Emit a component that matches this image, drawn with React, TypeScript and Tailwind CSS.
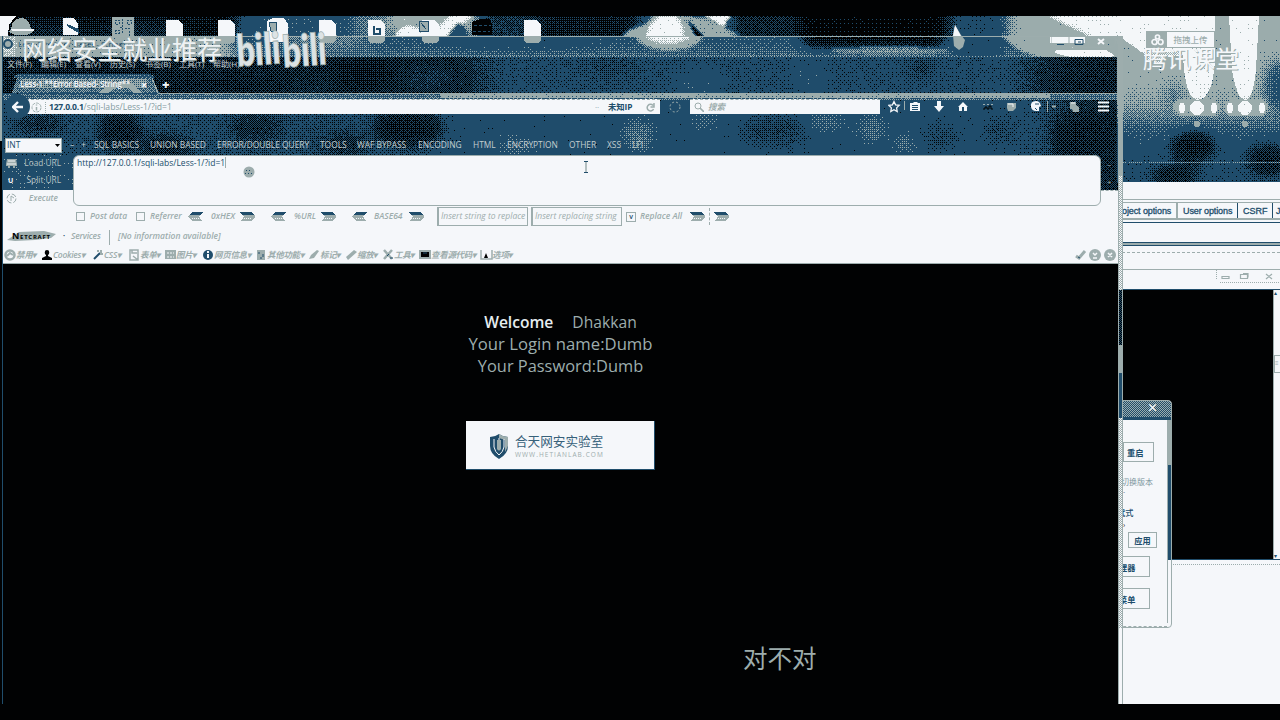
import React from 'react';

const bayer = [0, 8, 2, 10, 12, 4, 14, 6, 3, 11, 1, 9, 15, 7, 13, 5];

function Blob({ x, y, rx, ry, l }: { x: number; y: number; rx: number; ry: number; l: string }) {
  return <ellipse cx={x} cy={y} rx={rx} ry={ry} fill={l} />;
}

function Wallpaper() {
  return (
    <svg className="absolute left-0 top-4" width="1280" height="190" viewBox="0 16 1280 190" shapeRendering="crispEdges">
      <defs>
        <filter id="soft" x="-20%" y="-20%" width="140%" height="140%" colorInterpolationFilters="sRGB">
          <feGaussianBlur stdDeviation="7" />
        </filter>
        <filter id="soft2" x="-20%" y="-20%" width="140%" height="140%" colorInterpolationFilters="sRGB">
          <feGaussianBlur stdDeviation="1.5" />
        </filter>
        <filter id="grain" filterUnits="userSpaceOnUse" x="0" y="16" width="1280" height="190" colorInterpolationFilters="sRGB">
          <feTurbulence type="fractalNoise" baseFrequency="0.7" numOctaves="2" seed="4" />
          <feColorMatrix values="1 0 0 0 0.2  1 0 0 0 0.2  1 0 0 0 0.2  0 0 0 0 0.1" />
        </filter>
        <filter id="palette" filterUnits="userSpaceOnUse" x="0" y="16" width="1280" height="190" colorInterpolationFilters="sRGB">
          <feComponentTransfer>
            <feFuncR type="discrete" tableValues="0.004 0.125 0.61 0.96" />
            <feFuncG type="discrete" tableValues="0.008 0.30 0.675 0.97" />
            <feFuncB type="discrete" tableValues="0.012 0.42 0.675 0.98" />
          </feComponentTransfer>
        </filter>
        <pattern id="bayer" width="4" height="4" patternUnits="userSpaceOnUse">
          {bayer.map((v, i) => {
            const a = (v - 7.5) / 7.5;
            return <rect key={i} x={i % 4} y={Math.floor(i / 4)} width="1" height="1" fill={a > 0 ? '#fff' : '#000'} fillOpacity={Math.abs(a) * (a > 0 ? 0.2 : 0.22)} />;
          })}
        </pattern>
        <linearGradient id="glassTone" x1="0" x2="1">
          <stop offset="0" stopColor="#202020" />
          <stop offset="0.3" stopColor="#262626" />
          <stop offset="0.4" stopColor="#2b2b2b" />
          <stop offset="0.45" stopColor="#434343" />
          <stop offset="0.9" stopColor="#454545" />
          <stop offset="0.95" stopColor="#2a2a2a" />
          <stop offset="1" stopColor="#242424" />
        </linearGradient>
        <linearGradient id="lowTone" x1="0" x2="1">
          <stop offset="0" stopColor="#444" />
          <stop offset="0.3" stopColor="#404040" />
          <stop offset="0.42" stopColor="#4c4c4c" />
          <stop offset="0.9" stopColor="#4c4c4c" />
          <stop offset="1" stopColor="#2a2a2a" />
        </linearGradient>
        <linearGradient id="titleTone" x1="0" x2="0" y1="0" y2="1">
          <stop offset="0" stopColor="#555" />
          <stop offset="0.4" stopColor="#5c5c5c" />
          <stop offset="1" stopColor="#6c6c6c" />
        </linearGradient>
        <linearGradient id="skyTone" x1="0" x2="0" y1="0" y2="1">
          <stop offset="0" stopColor="#a8a8a8" />
          <stop offset="0.42" stopColor="#a4a4a4" />
          <stop offset="0.55" stopColor="#8a8a8a" />
          <stop offset="0.68" stopColor="#606060" />
          <stop offset="0.78" stopColor="#4e4e4e" />
          <stop offset="1" stopColor="#464646" />
        </linearGradient>
        <clipPath id="deskTop"><rect x="0" y="16" width="1280" height="20" /></clipPath>
        <clipPath id="glassTop"><rect x="3" y="36" width="1115" height="21" /></clipPath>
        <clipPath id="glass"><rect x="3" y="57" width="1115" height="36" /></clipPath>
        <clipPath id="glassLow"><rect x="3" y="93" width="1115" height="98" /></clipPath>
        <clipPath id="deskRight"><rect x="1117" y="16" width="163" height="166" /></clipPath>
      </defs>
      <g filter="url(#palette)">
        <rect x="0" y="16" width="1280" height="175" fill="#484848" />
        <g clipPath="url(#deskTop)">
          <g filter="url(#soft)">
            <rect x="-20" y="0" width="255" height="60" fill="#101010" />
            <Blob x={55} y={34} rx={40} ry={9} l="#303030" />
            <Blob x={142} y={34} rx={45} ry={12} l="#303030" />
            <rect x="242" y="0" width="110" height="60" fill="#555" />
            <rect x="352" y="0" width="36" height="60" fill="#747474" />
            <rect x="388" y="-10" width="90" height="45" fill="#aaa" />
            <rect x="480" y="0" width="110" height="60" fill="#363636" />
            <rect x="540" y="-10" width="95" height="60" fill="#1c1c1c" />
            <rect x="800" y="-10" width="146" height="70" fill="#020202" />
            <rect x="735" y="-10" width="65" height="70" fill="#2a2a2a" />
            <rect x="1008" y="-10" width="272" height="70" fill="#a8a8a8" />
          </g>
          <g filter="url(#soft2)">
            <path d="M394 37q10-16 21-9l22 2 15-16h22l-14 12-4 12z" fill="#fff" />
            <path d="M446 38l10-14q7-5 13 14z" fill="#4d4d4d" />
            <path d="M622 37q6-9 23-12l10-12h30l18 25z" fill="#a8a8a8" />
            <path d="M647 38q0-14 14-22h14q10 10 8 22z" fill="#fff" />
            <path d="M702 14h29l-7 13z" fill="#fff" />
            <path d="M683 15l24 4 16 8 18 9-40 2z" fill="#a2a2a2" />
            <path d="M687 20l18 18h-8z" fill="#000" />
            <path d="M1048 15l45 22H1280V14z" fill="#fff" />
          </g>
        </g>
        <g clipPath="url(#glassTop)">
          <rect x="3" y="36" width="1115" height="21" fill="url(#titleTone)" />
          <g filter="url(#soft)">
            <rect x="-10" y="20" width="242" height="50" fill="#a0a0a0" />
            <Blob x={325} y={40} rx={50} ry={9} l="#808080" />
            <Blob x={520} y={40} rx={90} ry={5} l="#404040" />
            <rect x="804" y="24" width="139" height="22" fill="#020202" />
            <rect x="955" y="20" width="46" height="50" fill="#4c4c4c" />
          </g>
          <g filter="url(#soft2)">
            <Blob x={669} y={36} rx={33} ry={14} l="#a8a8a8" />
            <Blob x={668} y={34} rx={22} ry={9} l="#e4e4e4" />
            <rect x="0" y="36" width="17" height="21" fill="#bbb" />
            <Blob x={890} y={51} rx={60} ry={4} l="#828282" />
            <path d="M1002 33h130v26h-80q-33-3-50-24z" fill="#a8a8a8" />
          </g>
          <path d="M1056 50h50l8 5-3 4h-34l-22-6z" fill="#fff" />
          <rect x="1050" y="37" width="35" height="6" fill="#fff" />
        </g>
        <g clipPath="url(#glass)">
          <rect x="3" y="57" width="1115" height="36" fill="url(#glassTone)" />
          <g filter="url(#soft)">
            <Blob x={365} y={72} rx={30} ry={12} l="#1a1a1a" />
            <Blob x={430} y={78} rx={30} ry={13} l="#363636" />
            <Blob x={310} y={86} rx={30} ry={8} l="#343434" />
            <Blob x={610} y={65} rx={30} ry={14} l="#3c3c3c" />
            <Blob x={700} y={84} rx={25} ry={12} l="#585858" />
            <Blob x={810} y={76} rx={15} ry={14} l="#585858" />
            <Blob x={922} y={68} rx={12} ry={12} l="#363636" />
          </g>
          <path d="M12 93l5-15q1-3 5-3h125q5 0 7 6l5 12z" fill="#727272" />
          <path d="M22 79h125v9H18z" fill="#8a8a8a" />
          <path d="M98 93l12-9 10-2 12 2 11 9h-9l-7-6h-10l-9 6z" fill="#a8a8a8" />
          <path d="M14 76q2-2 6-2h128q4 0 6 3v1H14z" fill="#606060" />
        </g>
        <g clipPath="url(#glassLow)">
          <rect x="3" y="93" width="1115" height="98" fill="url(#lowTone)" />
          <g filter="url(#soft)">
            <Blob x={408} y={128} rx={34} ry={18} l="#202020" />
            <Blob x={345} y={145} rx={25} ry={12} l="#303030" />
            <Blob x={255} y={128} rx={25} ry={16} l="#303030" />
            <Blob x={120} y={132} rx={20} ry={20} l="#262626" />
            <Blob x={165} y={148} rx={25} ry={12} l="#282828" />
            <Blob x={40} y={124} rx={28} ry={8} l="#2e2e2e" />
            <Blob x={515} y={148} rx={18} ry={10} l="#686868" />
            <Blob x={775} y={131} rx={36} ry={16} l="#3a3a3a" />
            <Blob x={638} y={135} rx={16} ry={16} l="#727272" />
            <Blob x={705} y={120} rx={14} ry={8} l="#6c6c6c" />
            <Blob x={825} y={122} rx={20} ry={8} l="#707070" />
            <Blob x={872} y={128} rx={14} ry={14} l="#6e6e6e" />
            <Blob x={905} y={143} rx={12} ry={9} l="#727272" />
            <Blob x={940} y={137} rx={18} ry={12} l="#3c3c3c" />
            <Blob x={1000} y={130} rx={17} ry={14} l="#3c3c3c" />
            <Blob x={1080} y={137} rx={28} ry={25} l="#232323" />
          </g>
          <rect x="3" y="94" width="1115" height="6" fill="#6e6e6e" />
          <rect x="440" y="94" width="610" height="4" fill="#a0a0a0" />
          <rect x="3" y="155" width="70" height="36" fill="#555" />
        </g>
        <g clipPath="url(#deskRight)">
          <rect x="1117" y="16" width="163" height="166" fill="url(#skyTone)" />
          <g filter="url(#soft)">
            <Blob x={1193} y={146} rx={22} ry={15} l="#1c1c1c" />
            <Blob x={1175} y={175} rx={24} ry={10} l="#242424" />
            <Blob x={1268} y={160} rx={22} ry={16} l="#262626" />
            <Blob x={1278} y={86} rx={14} ry={26} l="#555" />
            <Blob x={1174} y={96} rx={8} ry={12} l="#686868" />
          </g>
          <path d="M1117 16h98v44q-2 39-18 40-12-2-14-45l-37 0-29-20z" fill="#fff" />
          <path d="M1229 16h30l-3 54q-3 30-11 30t-13-30z" fill="#fff" />
          <path d="M1140 50l8 10 12 4 6-8h16v-4h-42z" fill="#c4c4c4" />
          <g filter="url(#soft2)">
            <rect x="1174" y="99" width="46" height="17" rx="8" fill="#a8a8a8" />
            <rect x="1224" y="99" width="44" height="17" rx="8" fill="#a8a8a8" />
          </g>
          {[1182, 1214, 1230, 1262].map((x) => <ellipse key={x} cx={x} cy="108" rx="3" ry="5.5" fill="#fff" />)}
          <circle cx="1197" cy="108" r="7" fill="#fff" />
          <circle cx="1245" cy="108" r="7" fill="#fff" />
          <circle cx="1197" cy="124" r="3" fill="#a8a8a8" />
          <circle cx="1245" cy="124" r="3" fill="#a8a8a8" />
          <path d="M1123 162.5h157" stroke="#777" />
        </g>
        <rect x="0" y="16" width="1280" height="175" filter="url(#grain)" />
        <rect x="0" y="16" width="1280" height="175" fill="url(#bayer)" />
      </g>
      <path d="M3 36.500H1109q8 0 9 7M158 93.500H1118M158 93l-6-15" stroke="#9dadad" fill="none" />
      <path d="M3 56.500H1105" stroke="#9dadad" strokeDasharray="1 2" />
    </svg>
  );
}

function DesktopIcons() {
  return (
    <svg className="absolute left-0 top-4" width="600" height="28" viewBox="0 16 600 28" shapeRendering="crispEdges">
      <path d="M0 16h16l-7 9-1 11H0z" fill="#f5f7fa" />
      <path d="M11 29q1-11 11-11 8 1 9 11l2 3-6 3H15l-6-3z" fill="#9dadad" />
      <path d="M10 29h24v2H13z" fill="#f5f7fa" />
      <path d="M63 18h11l4 6v11H63z" fill="#f5f7fa" />
      <path d="M67 24l12 5v4l-11-6z" fill="#204d6b" />
      <rect x="112" y="17" width="22" height="19" fill="#9dadad" />
      <path d="M115 20h4v4h-4zM127 20h4v4h-4zM115 30h4v3h-4zM122 19v14M125 28h6M120 27h3M129 31v5" stroke="#204d6b" strokeWidth="1" strokeDasharray="2 1" fill="none" />
      {[166, 218, 319, 368, 422, 524].map((x) => (
        <g key={x}>
          <path d={`M${x} 20h12l5 5v11H${x}z`} fill="#f5f7fa" />
          <path d={`M${x} 37h17v4l-3 2h-11l-3-2z`} fill="#9dadad" />
        </g>
      ))}
      <path d="M267 21l6-3h11l4 6v18h-21z" fill="#f5f7fa" />
      <path d="M269 22h8l-1 9h-5z" fill="#9dadad" stroke="#204d6b" />
      <path d="M374 26v8h6v-5h-4" stroke="#204d6b" strokeWidth="2" fill="none" />
      <path d="M419 21h9v10h-9zM421 23l5 6" stroke="#204d6b" fill="#9dadad" />
      <path d="M472 22l8-3h10l2 6v10h-20z" fill="#010203" />
      <path d="M474 25h17M473 31h17" stroke="#204d6b" strokeDasharray="3 2" />
    </svg>
  );
}

function Arrow({ left = false }: { left?: boolean }) {
  return (
    <svg width="15" height="9" viewBox="0 0 15 9" className={left ? 'shrink-0 -scale-x-100' : 'shrink-0'} shapeRendering="crispEdges">
      <path d="M0 0h11l4 4v1l-4 4H1l3-4.500z" fill="#9dadad" />
      <path d="M0 0h11l3 3H2z" fill="#204d6b" />
      <path d="M4 6.500h8" stroke="#f5f7fa" strokeDasharray="1 1" />
    </svg>
  );
}

const menus = [['文件(F)', 'w-[34px]'], ['编辑(E)', 'w-[34px]'], ['查看(V)', 'w-[35px]'], ['历史(S)', 'w-[35px]'], ['书签(B)', 'w-[34px]'], ['工具(T)', 'w-[34px]'], ['帮助(H)', 'w-[34px]']];
const hack = [
  ['SQL BASICS', 'w-[56px]'], ['UNION BASED', 'w-[67px]'], ['ERROR/DOUBLE QUERY', 'w-[103px]'], ['TOOLS', 'w-[37px]'], ['WAF BYPASS', 'w-[61px]'],
  ['ENCODING', 'w-[55px]'], ['HTML', 'w-[34px]'], ['ENCRYPTION', 'w-[62px]'], ['OTHER', 'w-[38px]'], ['XSS', 'w-[25px]'], ['LFI', 'w-[20px]'],
];

function NavBar() {
  return (
    <div className="flex h-[28px] items-center pb-px pl-[2px]">
      <div className="z-10 flex size-[25px] shrink-0 items-center justify-center rounded-full bg-[#204d6b]">
        <svg width="12" height="12" viewBox="0 0 12 12"><path d="M6 1L1 6l5 5M1 6h10" stroke="#f5f7fa" strokeWidth="2.400" fill="none" /></svg>
      </div>
      <div className="-ml-[4px] flex h-[15px] w-[634px] shrink-0 items-center border-t border-dashed border-[#9dadad] bg-[#f5f7fa] pl-[5px] leading-none text-[#829a9f]">
        <svg className="shrink-0" width="11" height="11" viewBox="0 0 11 11" fill="none" stroke="#9dadad"><circle cx="5.500" cy="5.500" r="4.500" strokeDasharray="3 1" /><path d="M5.500 2.500v1M5.500 5v3.500" strokeWidth="1.500" /></svg>
        <span className="ml-[3px] h-[11px] border-l border-dotted border-[#9dadad]" />
        <span className="ml-[3px] w-[124px] shrink-0 whitespace-nowrap text-[8.6px]"><b className="font-bold tracking-[-0.25px] text-[#204d6b]">127.0.0.1</b>/sqli-labs/Less-1/?id=1</span>
        <span className="ml-[422px] w-[13px] shrink-0 text-[8px]">··</span>
        <b className="w-[26px] shrink-0 whitespace-nowrap text-[8.3px] text-[#204d6b]">未知IP</b>
        <svg className="ml-[12px] shrink-0" width="9" height="9" viewBox="0 0 9 9" fill="none" stroke="#9dadad" strokeWidth="1.500"><path d="M7 2.500A3.300 3.300 0 1 0 7.500 6M8 0v4H4.500" /></svg>
      </div>
      <svg className="ml-2 shrink-0" width="14" height="14" viewBox="0 0 14 14" fill="none" stroke="#9dadad"><circle cx="7" cy="7" r="5" strokeDasharray="2 2" /></svg>
      <div className="ml-[8px] flex h-[15px] w-[190px] shrink-0 items-center border-t border-dashed border-[#9dadad] bg-[#f5f7fa] pl-1 text-[9px] leading-none text-[#9dadad]">
        <svg className="mr-1" width="10" height="10" viewBox="0 0 10 10" fill="none" stroke="#9dadad"><circle cx="4" cy="4" r="3" /><path d="M6 6l4 4" strokeWidth="1.600" /></svg>
        <b className="text-[8.5px] italic">搜索</b>
      </div>
      <svg className="ml-[8px] shrink-0" width="224" height="14" viewBox="888 100 224 14">
        <path d="M894 101.500l1.600 3.300 3.600.5-2.600 2.600.6 3.600-3.200-1.700-3.200 1.700.6-3.600-2.600-2.600 3.600-.5z" stroke="#f5f7fa" strokeWidth="1.300" fill="#204d6b" />
        <path d="M904.500 101v9M1047.500 101v11" stroke="#9dadad" />
        <path d="M910 103h3l1-1h3l1 1h2v8h-10z" fill="#f5f7fa" /><path d="M912 105.500h6M912 107.500h6M912 109.500h6" stroke="#204d6b" />
        <path d="M937 101h4v5h3l-5 6-5-6h3z" fill="#f5f7fa" />
        <path d="M958 107l5-5 5 5h-1v4h-3v-4h-2v4h-3v-4z" fill="#f5f7fa" />
        <path d="M983 109h2v-2h2v2h2v-3h2v3h2" stroke="#010203" fill="none" /><path d="M983 104.500h10" stroke="#9dadad" strokeDasharray="2 2" />
        <path d="M1007 103h9v5l-3 3h-5l-1-3z" fill="#9dadad" /><path d="M1008 104h5v3" stroke="#f5f7fa" fill="none" />
        <path d="M1031 107q-1-6 5-6 4 0 5 5l-2 1v4h-3q-4 0-5-4z" fill="#f5f7fa" /><path d="M1035 104h4M1035 108l2 2" stroke="#204d6b" />
        <path d="M1052 106.500h4" stroke="#9dadad" strokeWidth="2" />
        <path d="M1070 102h6v3l3 2v5h-6l-1-3h-2z" fill="#9dadad" /><path d="M1071 103h4" stroke="#f5f7fa" />
        <path d="M1098 102.500h11M1098 106.500h11M1098 110.500h11" stroke="#f5f7fa" strokeWidth="2" />
      </svg>
    </div>
  );
}

const devIcons = [
  <g key="0"><circle cx="6" cy="6" r="4.500" stroke="#9dadad" strokeWidth="2.500" fill="#f5f7fa" /><path d="M3 7l3-3 3 2" stroke="#9dadad" fill="none" strokeWidth="2" /></g>,
  <path key="1" d="M6 1q3 0 2 4l-1 1v1l4 2v2H1V9l4-2V6L4 5Q3 1 6 1z" fill="#010203" />,
  <g key="2"><path d="M2 10l6-6" stroke="#204d6b" strokeWidth="2" /><path d="M5 2h2M8 5h3M9 1v3" stroke="#9dadad" strokeWidth="2" /></g>,
  <path key="3" d="M2 1h8v10H2zM4 1v3h5M5 7l5 4" stroke="#9dadad" strokeWidth="1.500" fill="none" />,
  <g key="4"><path d="M1 1h11v9H1z" fill="#9dadad" /><path d="M3 4h7M3 8h7" stroke="#f5f7fa" strokeDasharray="2 1" /></g>,
  <g key="5"><circle cx="6" cy="6" r="5" fill="#204d6b" /><path d="M6 2v2M6 5v4" stroke="#f5f7fa" strokeWidth="2" /></g>,
  <g key="6"><path d="M2 1h8v10H2z" fill="#9dadad" /><path d="M4 3v2M8 5v3M5 9h2" stroke="#204d6b" /></g>,
  <path key="7" d="M1 10l2-4 6-5 2 1-5 7z" fill="#9dadad" />,
  <path key="8" d="M1 8l8-7 3 2-9 8z" fill="#9dadad" />,
  <g key="9"><path d="M2 1l8 9M10 1L2 10" stroke="#9dadad" strokeWidth="2.500" /><path d="M5 7l2-2M8 9h3" stroke="#204d6b" /></g>,
  <g key="10"><path d="M0 1h12v9H0z" fill="#9dadad" /><path d="M2 3h8v5H2z" fill="#010203" /><path d="M4 4h4" stroke="#204d6b" /></g>,
  <g key="11"><path d="M1 1v9h11V1" stroke="#9dadad" strokeWidth="1.500" fill="none" /><path d="M4 9l2-5 2 5z" fill="#010203" /></g>,
];
const devLabels = [
  ['禁用▾', 'w-[37px]'], ['Cookies▾', 'w-[51px]'], ['CSS▾', 'w-[36px]'], ['表单▾', 'w-[36px]'], ['图片▾', 'w-[38px]'], ['网页信息▾', 'w-[53px]'], ['其他功能▾', 'w-[53px]'], ['标记▾', 'w-[37px]'], ['缩放▾', 'w-[37px]'], ['工具▾', 'w-[37px]'], ['查看源代码▾', 'w-[61px]'], ['选项▾', 'w-[37px]'],
];

function Hackbar() {
  return (
    <>
      <div className="flex h-4 items-center pl-0.5">
        <div className="flex h-[15px] w-[57px] shrink-0 items-center justify-between border border-[#9dadad] bg-[#f5f7fa] px-px text-[8.5px] text-[#204d6b]">
          INT<svg width="5" height="3" viewBox="0 0 5 3"><path d="M0 0h5L2.500 3z" fill="#010203" /></svg>
        </div>
        <div className="flex pl-[8px] pt-px text-[8.4px] font-medium leading-none text-[#c3cecf]">
          <span className="w-[11px]">–</span><span className="w-[13px]">+</span>
          {hack.map(([t, w]) => <span key={t} className={`${w} whitespace-nowrap`}>{t}</span>)}
        </div>
      </div>
      <div className="mt-[2px] flex h-[52px]">
        <div className="flex w-[70px] shrink-0 flex-col text-[8.3px] leading-none text-[#b7c4c5]">
          <div className="flex h-[16px] items-center justify-between pl-[3px] pr-[12px]">
            <svg width="11" height="9" viewBox="0 0 11 9"><path d="M1 0h9l1 5v2h-2v2H7V7H4v2H2V7H0V5z" fill="#9dadad" /><path d="M2 2h7M1 5h9" stroke="#f5f7fa" /></svg>Load URL
          </div>
          <div className="flex h-[19px] items-center justify-between pl-[5px] pr-[12px]"><b className="text-[7px] text-[#f5f7fa]">U</b>Split URL</div>
          <div className="flex h-[17px] items-center justify-between bg-[#f5f7fa] pl-[3px] pr-[15px] text-[#9dadad]">
            <svg width="11" height="11" viewBox="0 0 11 11" fill="none" stroke="#9dadad"><circle cx="5.500" cy="5.500" r="4.500" strokeDasharray="5 2" /><path d="M5 3v5M5 3l3 2" /></svg><b className="font-semibold italic">Execute</b>
          </div>
        </div>
        <div className="w-[1028px] shrink-0 bg-[linear-gradient(to_bottom,transparent_35px,#f5f7fa_35px)]">
          <div className="h-[51px] rounded-[6px] border border-[#9dadad] bg-[#f5f7fa] px-[3px] pt-[3px] text-[8.5px] leading-[8px] text-[#204d6b]"><span className="border-r border-[#9dadad]">http://127.0.0.1/sqli-labs/Less-1/?id=1</span></div>
        </div>
        <div className="flex flex-1 flex-col text-[8px] leading-none text-[#9dadad]">
          <div className="h-[35px] pl-[6px] pt-[5px]">–<br /><span className="mt-2.5 block">+</span></div>
          <div className="flex-1 border-t border-dashed border-[#9dadad] bg-[#f5f7fa]" />
        </div>
      </div>
    </>
  );
}

function Options() {
  const box = 'size-[9px] shrink-0 border border-[#9dadad]';
  return (
    <div className="flex h-[19px] items-center whitespace-nowrap bg-[#f5f7fa] pl-[73px] text-[8.5px] font-semibold italic leading-none text-[#9dadad]">
      <span className={box} /><span className="w-[51px] pl-[5px]">Post data</span>
      <span className={box} /><span className="w-[43px] pl-[5px]">Referrer</span>
      <Arrow left /><span className="w-[37px] pl-[8px]">0xHEX</span><Arrow />
      <span className="w-[16px] shrink-0" /><Arrow left /><span className="w-[35px] pl-[8px]">%URL</span><Arrow />
      <span className="w-[16px] shrink-0" /><Arrow left /><span className="w-[42px] pl-[7px]">BASE64</span><Arrow />
      <span className="ml-[13px] flex h-[19px] w-[91px] shrink-0 items-center overflow-hidden border border-l-2 border-[#9dadad] pl-[2px] font-medium">Insert string to replace</span>
      <span className="ml-[3px] flex h-[19px] w-[91px] shrink-0 items-center overflow-hidden border border-l-2 border-[#9dadad] pl-[2px] font-medium">Insert replacing string</span>
      <span className="ml-[4px] flex size-[10px] items-center justify-center border border-[#9dadad] text-[7px] not-italic text-[#204d6b]">v</span>
      <span className="w-[54px] pl-[4px]">Replace All</span><Arrow />
      <span className="mx-[4px] h-[17px] border-l border-dashed border-[#9dadad]" /><Arrow />
    </div>
  );
}

function Browser() {
  return (
    <div className="absolute left-0 top-9 flex h-[668px] w-[1123px] font-['Open_Sans','Noto_Sans_CJK_SC',sans-serif]">
      <div className="w-[3px] shrink-0 border-r border-[#204d6b] bg-[#010203]"><div className="h-[105px] bg-[#9dadad]" /></div>
      <div className="flex w-[1115px] shrink-0 flex-col">
        <div className="flex h-[20px] items-start justify-between pl-0">
          <div className="flex items-center gap-[5px] pt-[3px] text-[8px] leading-[10px] text-[#204d6b]">
            <span className="size-[10px] rounded-full border-2 border-[#204d6b] bg-[#9dadad]" />Less-1 **Error Based- String**
          </div>
          <svg width="65" height="12" viewBox="0 0 65 12" className="mr-[2px]"><path d="M0 0v8q0 3 4 3h56q4 0 4-3V0M18 0v11M37 0v11" stroke="#9dadad" fill="none" /><path d="M6 8.500h7M24 3.500h8v5h-8zM27 6h3" stroke="#204d6b" fill="none" /><path d="M47 3l6 5M53 3l-6 5" stroke="#f5f7fa" fill="none" strokeWidth="2" /></svg>
        </div>
        <div className="flex h-[15px] items-center whitespace-nowrap pl-[4px] text-[8px] leading-none text-[#c3cecf]">
          {menus.map(([t, w]) => <span key={t} className={w}>{t}</span>)}
        </div>
        <div className="flex h-[22px] items-center pl-[17px] pt-[4px] text-[8px] font-semibold leading-none text-[#f5f7fa]">
          <span className="w-[121px] whitespace-nowrap tracking-[-0.2px]">Less-1 **Error Based- String**</span>
          <b className="w-[21px] text-[11px]">×</b><b className="text-[13px]">+</b>
        </div>
        <NavBar />
        <div className="h-[16px]" />
        <Hackbar />
        <Options />
        <div className="flex h-[20px] items-center bg-[#f5f7fa] pl-1 text-[8.5px] font-semibold italic leading-none text-[#9dadad]">
          <svg width="50" height="13" viewBox="0 0 50 13"><path d="M0 10l12-8 25-1 12 3-5 4-16 2-20 1z" fill="#9dadad" /><text x="5" y="9" fontSize="9" fontWeight="700" fontFamily="Open Sans" fontStyle="normal" fill="#010203" textLength="38" style={{ fontVariantCaps: 'small-caps' }}>Netcraft</text></svg>
          <span className="w-[14px] text-center text-[#204d6b]">·</span><span className="w-[38px] tracking-[-0.2px]">Services</span>
          <span className="mt-0.5 h-[15px] w-[9px] border-l border-[#9dadad]" /><span>[No information available]</span>
        </div>
        <div className="flex h-[18px] items-center whitespace-nowrap border-b border-[#9dadad] bg-[#f5f7fa] pl-[1px] text-[8.5px] font-semibold italic leading-none text-[#9dadad]">
          {devLabels.map(([t, w], i) => (
            <span key={t} className={`flex shrink-0 items-center ${w}`}><svg className="shrink-0" width="13" height="12" viewBox="0 0 13 12">{devIcons[i]}</svg><span className="-ml-px pt-px tracking-[-0.3px]">{t}</span></span>
          ))}
          <svg className="ml-auto mr-[1px]" width="42" height="12" viewBox="0 0 42 12"><path d="M1 7l3 2 6-7" stroke="#9dadad" strokeWidth="3" fill="none" /><path d="M3 8l2 1" stroke="#204d6b" /><circle cx="20" cy="6" r="6" fill="#9dadad" /><circle cx="35" cy="6" r="6" fill="#9dadad" /><path d="M18 4l2 2 2-2M18 9h4M33 4l4 4M37 4l-4 4" stroke="#f5f7fa" strokeWidth="1.500" fill="none" /></svg>
        </div>
        <main className="flex flex-1 flex-col items-center bg-[#010203] pt-[47px] text-[16.7px] leading-[22px] text-[#9dadad]">
          <div className="text-[15.6px]"><span className="font-semibold text-[#e6edf0]">Welcome</span><span className="ml-[19px] tracking-[.05px]">Dhakkan</span></div>
          <div>Your Login name:Dumb</div>
          <div className="text-[16.4px]">Your Password:Dumb</div>
          <div className="mt-[44px] flex h-[49px] w-[189px] items-center border-b border-r border-[#204d6b] bg-[#f5f7fa] pl-[23px] pt-[2px]">
            <svg width="20" height="25" viewBox="0 0 20 25"><path d="M1 3q5 0 9-3 4 3 9 3v9q0 8-9 13-9-5-9-13z" fill="#204d6b" /><path d="M10 0q4 3 9 3v9l-3 6V6l-6-2z" fill="#9dadad" /><path d="M5 5v8q1 5 5 8 4-3 5-8V5M10 4v12" stroke="#f5f7fa" fill="none" /><path d="M8 6h4v9q-2 3-4 0z" fill="#9dadad" /></svg>
            <div className="ml-[6px] flex flex-col"><span className="text-[12.600px] leading-[14px] text-[#37617a] font-[Noto_Sans_CJK_SC,sans-serif]">合天网安实验室</span><span className="mt-[3px] text-[6.500px] leading-[7px] tracking-[1.05px]">WWW.HETIANLAB.COM</span></div>
          </div>
        </main>
      </div>
      <div className="flex flex-1 flex-col border-x border-[#9dadad]">
        <div className="h-[140px] bg-[#9dadad]" />
        <div className="h-[114px] bg-[repeating-conic-gradient(#9dadad_0_25%,#f5f7fa_0_50%)] bg-[length:2px_2px]" />
        <div className="h-[55px] bg-[repeating-conic-gradient(#204d6b_0_25%,#010203_0_50%)] bg-[length:2px_2px]" />
        <div className="h-[28px] bg-[#9dadad]" />
        <div className="h-[45px] bg-[#204d6b]" />
        <div className="h-[210px] bg-[repeating-conic-gradient(#9dadad_0_25%,#f5f7fa_0_50%)] bg-[length:2px_2px]" />
        <div className="flex-1 bg-[#f5f7fa]" />
      </div>
    </div>
  );
}

function BurpWindow() {
  return (
    <div className="absolute left-[1122px] top-[182px] flex h-[522px] w-[158px] flex-col bg-[#f5f7fa] font-['Liberation_Sans',sans-serif]">
      <div className="h-[18px] border-b border-[#9dadad]" />
      <div className="mt-[2px] flex h-[18px] border-b-2 border-t border-[#9dadad] text-[9px] font-medium leading-[17px] text-[#204d6b] [-webkit-text-stroke:0.3px_#204d6b]">
        <span className="w-[56px] shrink-0 whitespace-nowrap border-r-2 border-[#9dadad] tracking-[-0.1px]">oject options</span>
        <span className="w-[60px] shrink-0 whitespace-nowrap border-r border-[#204d6b] pl-[5px] tracking-[-0.1px]">User options</span>
        <span className="w-[35px] shrink-0 border-r border-[#204d6b] pl-[5px]">CSRF</span><span className="pl-[3px]">J</span>
      </div>
      <div className="mt-[2px] border-b border-[#204d6b]" />
      <div className="mt-[19px] h-[4px] border-y border-[#204d6b] bg-[#9dadad]" />
      <div className="mt-[6px] border-b border-dashed border-[#9dadad]" />
      <div className="mt-[16px] flex h-[21px] justify-end border-b border-t border-b-[#204d6b] border-t-[#9dadad]">
        <svg width="64" height="14" viewBox="0 0 64 14"><path d="M.5 0v9M4 12.500h60" stroke="#9dadad" strokeDasharray="1 1" /><path d="M6 6.500h7v2H6zM24.500 4.500h7v4h-7zM27 3.500h5v4M50 4l6 5M56 4l-6 5" stroke="#9dadad" fill="none" strokeWidth="1.200" /></svg>
      </div>
      <div className="flex h-[269px]">
        <div className="w-[151px] bg-[#010203]" />
        <div className="flex flex-1 flex-col justify-between border-l border-[#9dadad] text-[6px] leading-none text-[#204d6b]"><span>▴</span><span className="-mt-[121px] h-[18px] border border-r-0 border-[#9dadad] pt-1 text-[#9dadad]">≡</span><span>▾</span></div>
      </div>
      <div className="h-[6px] border-b border-t border-b-[#9dadad] border-t-[#204d6b] [border-bottom-style:dotted]" />
    </div>
  );
}

function ServiceWindow() {
  return (
    <div className="absolute left-[1112px] top-[400px] flex h-[228px] w-[60px] flex-col overflow-hidden rounded-[4px] border border-[#9dadad] bg-[#f5f7fa] font-['Noto_Sans_CJK_SC',sans-serif] text-[8.2px] leading-none text-[#204d6b]">
      <div className="h-[19px] shrink-0 border-b-[3px] border-[#204d6b] bg-[repeating-conic-gradient(#204d6b_0_25%,#9dadad_0_50%)] bg-[length:2px_2px] pr-[13px] text-right text-[11px] font-bold leading-[12px] text-[#f5f7fa]">×</div>
      <div className="flex flex-1">
        <div className="flex flex-1 flex-col border-b border-dashed border-[#9dadad] pl-[10px]">
          <div className="mt-[22px] flex h-[20px] w-[31px] items-center border border-[#9dadad] pl-[3px] font-bold">重启</div>
          <div className="-ml-[2px] mt-[16px] whitespace-nowrap text-[8px] text-[#7d969e]">切换版本</div>
          <div className="mt-[3px] text-[6px]">-</div>
          <div className="-ml-[6px] mt-[13px] whitespace-nowrap font-medium">试式</div>
          <div className="mt-[5px] h-[7px] text-[7px] text-[#010203]">›</div>
          <div className="ml-[5px] mt-[4px] flex h-[16px] w-[29px] items-center justify-center border border-[#9dadad] font-bold">应用</div>
          <div className="mt-[8px] flex h-[21px] w-[27px] items-center border border-l-0 border-[#9dadad] font-bold"><span className="-ml-[4px]">理器</span></div>
          <div className="mt-[11px] flex h-[21px] w-[27px] items-center border border-l-0 border-[#9dadad] font-bold"><span className="-ml-[4px]">菜单</span></div>
        </div>
        <div className="mb-[4px] w-[4px] border-l border-[#9dadad]"><div className="h-[45px] bg-[#9dadad]" /><div className="h-[95px] bg-[#204d6b]" /></div>
      </div>
    </div>
  );
}

export default function App() {
  return (
    <div className="relative h-[720px] w-[1280px] overflow-hidden bg-[#010203]">
      <Wallpaper />
      <DesktopIcons />
      <svg className="absolute left-[952px] top-[25px]" width="13" height="25" viewBox="0 0 13 25"><path d="M1 10L3 0l6 10 4 5-2 7-4 3-5-4z" fill="#9dadad" /><path d="M1 11L3 0l6 11z" fill="#f5f7fa" /></svg>
      <BurpWindow />
      <ServiceWindow />
      <Browser />
      <div className="absolute left-[22px] top-[34px] whitespace-nowrap font-['Noto_Sans_CJK_SC',sans-serif] text-[25px] leading-[28px] text-[#eef2f4] [text-shadow:1px_1px_0_#9dadad]">网络安全就业推荐</div>
      <svg className="absolute left-[234px] top-[14px]" width="98" height="58" viewBox="0 -6 98 58">
        <g fill="#dce3e5" stroke="#9dadad" strokeWidth="0.800" fontFamily="Lato" fontWeight="800" fontSize="44">
          <text x="3" y="45" textLength="44" lengthAdjust="spacingAndGlyphs" transform="rotate(-4 24 40)">bili</text>
          <text x="49" y="46" textLength="44" lengthAdjust="spacingAndGlyphs" transform="rotate(-4 70 40)">bili</text>
        </g>
      </svg>
      <div className="absolute left-[1146px] top-[31px] flex h-[17px] w-[69px] border border-[#9dadad] bg-[#f5f7fa] font-['Noto_Sans_CJK_SC',sans-serif] text-[8.500px] font-medium leading-[15px] text-[#9dadad]">
        <div className="flex w-[20px] items-center justify-center bg-[#9dadad]"><svg width="13" height="12" viewBox="0 0 13 12" fill="none" stroke="#f5f7fa" strokeWidth="1.700"><circle cx="6.500" cy="3" r="2" /><circle cx="3.500" cy="8" r="2.500" /><circle cx="9.500" cy="8" r="2.500" /></svg></div>
        <span className="flex-1 text-center">拖拽上传</span>
      </div>
      <div className="absolute left-[1143px] top-[44px] whitespace-nowrap font-['Noto_Sans_CJK_SC',sans-serif] text-[24px] leading-[27px] text-[#f5f7fa] [text-shadow:1px_1px_0_#9dadad]">腾讯课堂</div>
      <svg className="absolute left-[243px] top-[166px]" width="12" height="12" viewBox="0 0 12 12"><circle cx="6" cy="6" r="5.500" fill="#9dadad" /><path d="M3 4.500h6M2 7.500h8" stroke="#204d6b" strokeDasharray="1 2" /></svg>
      <svg className="absolute left-[583px] top-[161px]" width="6" height="12" viewBox="0 0 6 12"><path d="M1 .5h4M1 11.500h4" stroke="#204d6b" /><path d="M3 1v10" stroke="#9dadad" strokeWidth="1.500" /></svg>
      <div className="absolute left-[743px] top-[642px] whitespace-nowrap font-['Noto_Sans_CJK_SC',sans-serif] text-[24.500px] leading-[32px] text-[#9dadad]">对不对</div>
    </div>
  );
}
